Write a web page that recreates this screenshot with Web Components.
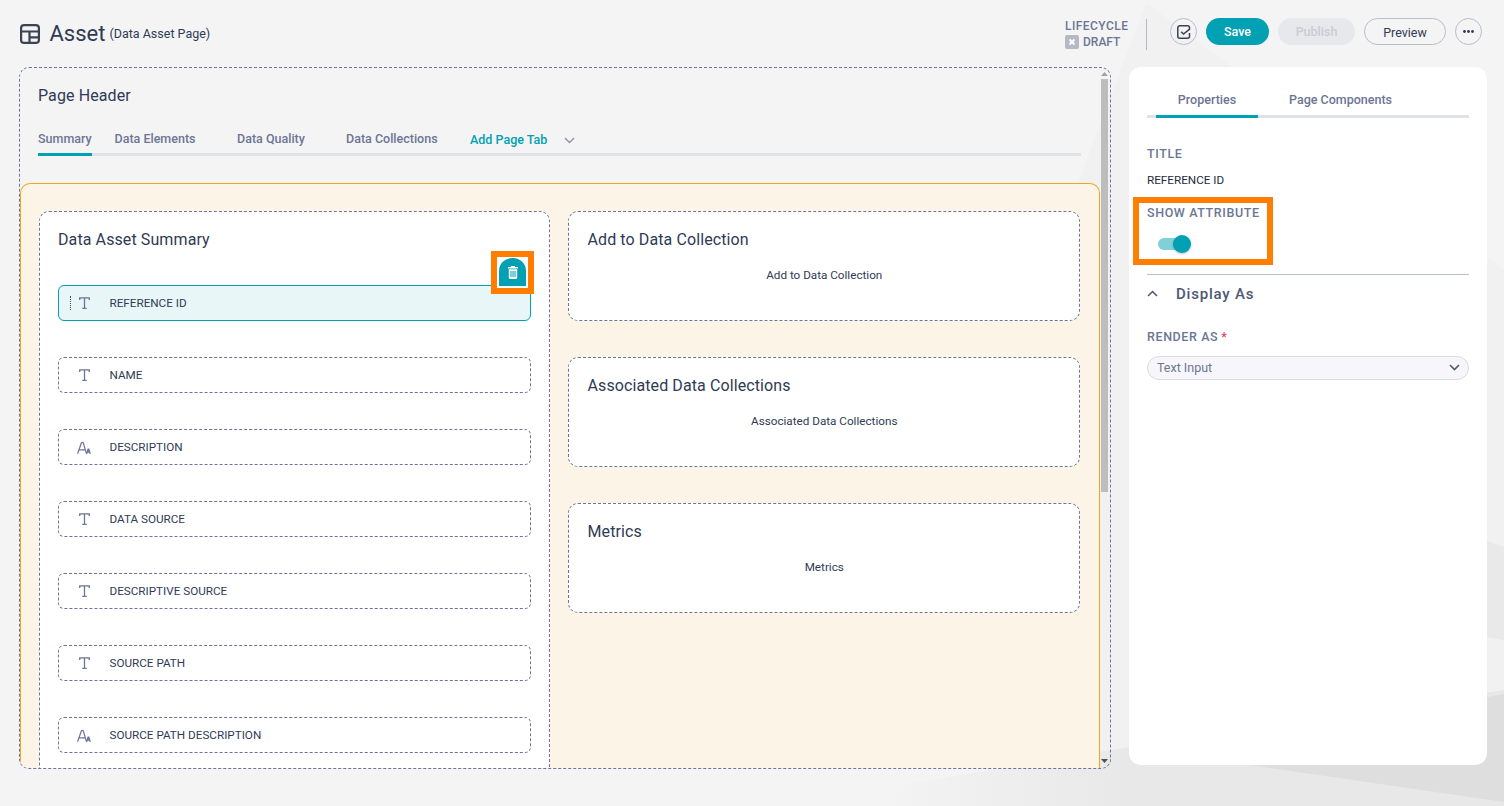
<!DOCTYPE html>
<html lang="en"><head><meta charset="utf-8"><title>Asset</title>
<style>
html,body{margin:0;height:100%;overflow:hidden}
body{background:#f4f4f4;font-family:Roboto,"Liberation Sans",sans-serif;color:#2f3a55}
</style></head><body>
<app-shell>
  <page-top slot="top"></page-top>
  <canvas-frame slot="canvas">
    <page-head></page-head>
    <layout-zone>
      <summary-card title="Data Asset Summary">
        <attr-row kind="t" selected>REFERENCE ID</attr-row>
        <attr-row kind="t">NAME</attr-row>
        <attr-row kind="a">DESCRIPTION</attr-row>
        <attr-row kind="t">DATA SOURCE</attr-row>
        <attr-row kind="t">DESCRIPTIVE SOURCE</attr-row>
        <attr-row kind="t">SOURCE PATH</attr-row>
        <attr-row kind="a">SOURCE PATH DESCRIPTION</attr-row>
      </summary-card>
      <div slot="right">
        <widget-card title="Add to Data Collection"></widget-card>
        <widget-card title="Associated Data Collections"></widget-card>
        <widget-card title="Metrics"></widget-card>
      </div>
    </layout-zone>
  </canvas-frame>
  <props-panel slot="panel"></props-panel>
</app-shell>
<script>
function def(name, css, html, init){
  customElements.define(name, class extends HTMLElement{
    connectedCallback(){
      if(this.shadowRoot) return;
      const r=this.attachShadow({mode:'open'});
      r.innerHTML='<style>'+css+'</style>'+(typeof html==='function'?html(this):html);
      if(init) init(this,r);
    }
  });
}
def('app-shell',`
  :host{display:block;position:relative;width:1504px;height:806px;overflow:hidden;background:#f4f4f4}
  .bg{position:absolute;inset:0;width:1504px;height:806px}
  .wrap{position:relative;display:grid;grid-template-columns:1092px 358px;grid-template-rows:67px 702px;column-gap:18px;padding-left:19px}
  .t{grid-column:1 / 3;margin-right:5px;height:67px}
  .p{height:698px}
`,`
  <svg class="bg" viewBox="0 0 1504 806" aria-hidden="true">
    <defs><linearGradient id="g" gradientUnits="userSpaceOnUse" x1="880" y1="0" x2="1130" y2="0"><stop offset="0" stop-color="#f4f4f4"/><stop offset="1" stop-color="#e8e8e8"/></linearGradient></defs>
    <polygon points="1146,3 1232,67 1504,270 1504,806 1060,806 1060,231" fill="#f1f1f1"/>
    <polygon points="1400,510 1504,547 1504,640 1400,625" fill="#e9e9e9"/>
    <polygon points="800,806 800,802 1129,747 1504,690 1504,806" fill="url(#g)"/>
    <polygon points="1250,765 1504,802 1504,694 1487,697" fill="#dedede"/>
  </svg>
  <div class="wrap">
    <div class="t"><slot name="top"></slot></div>
    <slot name="canvas"></slot>
    <div class="p"><slot name="panel"></slot></div>
  </div>`);
def('page-top',`
  :host{display:flex;align-items:center;height:68px;box-sizing:border-box}
  .ic{width:20px;height:20px;margin:0 9.500px 0 1px;display:block;position:relative;top:-.5px}
  h1{font:400 22px/1 Roboto,sans-serif;margin:0;color:#2f3a55}
  .sub{font-size:12.500px;margin-left:4px;color:#2f3a55;position:relative;top:-1px}
  .sp{flex:1}
  .lc{font:500 12px/15px Roboto,sans-serif;color:#6b7694;width:81px;letter-spacing:.45px}
  .dr{display:flex;align-items:center;gap:4px;letter-spacing:0;margin-top:1px}
  .x{width:14px;height:14px;background:#b5b9c6;border-radius:2px;display:inline-flex;align-items:center;justify-content:center}
  .div{width:1px;height:31px;background:#b4b8c6;margin-right:23px}
  .btn{box-sizing:border-box;height:27px;border-radius:13.500px;font:500 12.500px/27px Roboto,sans-serif;text-align:center;margin-bottom:5px}
  .icb{width:27px;border:1px solid #b8bccb;background:transparent;display:flex;align-items:center;justify-content:center}
  .save{width:63px;background:#01a0b2;color:#fff;margin-left:9px}
  .pub{width:77px;background:#e7e8ec;color:#c9ccd4;margin-left:9px}
  .prev{width:82px;border:1px solid #b8bccb;color:#2f3a55;margin-left:9px;font-weight:400;line-height:28px}
  .more{margin-left:9px}
`,`
  <svg class="ic" viewBox="0 0 20 20" fill="none" stroke="#3a4254" stroke-width="2.200"><rect x="1.100" y="1.100" width="17.800" height="17.800" rx="3"/><path d="M1 7.500h18M9.500 7.500V19M9.500 13.300H19"/></svg>
  <h1>Asset</h1><span class="sub">(Data Asset Page)</span>
  <span class="sp"></span>
  <div class="lc">LIFECYCLE<div class="dr"><span class="x"><svg width="8" height="8" viewBox="0 0 8 8"><path d="M1.500 1.500l5 5M6.500 1.500l-5 5" stroke="#fff" stroke-width="2"/></svg></span>DRAFT</div></div>
  <span class="div"></span>
  <div class="btn icb"><svg width="14" height="14" viewBox="0 0 14 14" fill="none" stroke="#3a4254" stroke-width="1.500"><path d="M12.500 4V2.800a2 2 0 0 0-2-2H2.800a2 2 0 0 0-2 2v8.400a2 2 0 0 0 2 2h7.700a2 2 0 0 0 2-2V8"/><path d="M4.200 6.800l2.300 2.300 6.500-5.300"/></svg></div>
  <div class="btn save">Save</div>
  <div class="btn pub">Publish</div>
  <div class="btn prev">Preview</div>
  <div class="btn icb more"><svg width="11" height="3" viewBox="0 0 11 3" fill="#2f3a55"><circle cx="1.500" cy="1.500" r="1.400"/><circle cx="5.500" cy="1.500" r="1.400"/><circle cx="9.500" cy="1.500" r="1.400"/></svg></div>
`);
def('canvas-frame',`
  :host{display:flex;box-sizing:border-box;height:702px;width:1092px;border:1px dashed #6b7694;border-radius:10px;overflow:hidden}
  .c{flex:1;min-width:0;overflow:hidden}
  .sb{width:7px;margin-right:2px;padding-bottom:2px;display:flex;flex-direction:column;align-items:center;flex:none}
  .arr{height:11px;display:flex;align-items:center;justify-content:center;flex:none}
  .th{height:413px;width:7px;background:#bdbdbd;flex:none}
  .sp{flex:1}
`,`
  <div class="c"><slot></slot></div>
  <div class="sb"><div class="arr"><svg width="7" height="4" viewBox="0 0 7 4"><path d="M3.500 0L7 4H0z" fill="#a3a3a3"/></svg></div><div class="th"></div><div class="sp"></div><div class="arr" style="height:10px"><svg width="7" height="4" viewBox="0 0 7 4"><path d="M0 0h7L3.500 4z" fill="#505050"/></svg></div></div>
`);
def('page-head',`
  :host{display:block;padding:0 19px 0 18px;height:115px;box-sizing:border-box}
  .h{font:400 16px/18px Roboto,sans-serif;padding-top:19px;letter-spacing:.1px;color:#2f3a55}
  .tabs{display:flex;margin-top:24px;height:24px;border-bottom:3px solid #e1e2e7;font:500 12.500px/16px Roboto,sans-serif;color:#6b7694;width:1043px;box-sizing:content-box}
  .tb{height:27px;box-sizing:border-box;padding-top:2px;flex:none}
  .on{border-bottom:3px solid #01a0b2;width:54px}
  .add{color:#01a0b2;display:flex;align-items:flex-start;padding-top:3px}
`,`
  <div class="h">Page Header</div>
  <div class="tabs">
    <div class="tb on">Summary</div>
    <div class="tb" style="margin-left:22.500px;width:122.500px">Data Elements</div>
    <div class="tb" style="width:109px">Data Quality</div>
    <div class="tb" style="width:124px">Data Collections</div>
    <div class="tb add">Add Page Tab<svg width="11" height="7" viewBox="0 0 11 7" fill="none" stroke="#8b93a8" stroke-width="1.400" style="margin:5px 0 0 17px"><path d="M1 1l4.500 4.500L10 1"/></svg></div>
  </div>
`);
def('layout-zone',`
  :host{display:grid;grid-template-columns:511px 512px;column-gap:18px;box-sizing:border-box;width:1080px;height:640px;padding:27px 18px 0 18px;background:#fbf4e7;border:1px solid #f0a71f;border-bottom:0;border-radius:10px 10px 0 0;align-items:start}
  ::slotted([slot=right]){display:flex;flex-direction:column;gap:36px}
`,`<slot></slot><slot name="right"></slot>`);
const T='<svg width="11" height="12" viewBox="0 0 11 12" fill="none" stroke="#6b7694" stroke-width="1.300"><path d="M.7 3V.8h9.600V3M5.500 .8v10.500M3.300 11.300h4.400"/></svg>';
const A='<svg width="14" height="13" viewBox="0 0 14 13" fill="none" stroke="#6b7694" stroke-width="1.200"><path d="M.6 12.700L4.300 2a1 1 0 0 1 1-.7h0a1 1 0 0 1 1 .7l3.200 10.700M1.900 8.900h6"/><path d="M9.600 12.700l1.500-4.600h.6l1.500 4.600M10.200 11h2.500" stroke-width="1.400"/></svg>';
def('summary-card',`
  :host{display:block;box-sizing:border-box;height:620px;background:#fff;border:1px dashed #6b7694;border-radius:10px;padding:0 18px}
  .h{font:400 16px/18px Roboto,sans-serif;letter-spacing:.1px;padding-top:19px;height:73px;box-sizing:border-box;color:#2f3a55}
  .l{display:flex;flex-direction:column;gap:36px}
`,h=>`<div class="h">${h.getAttribute('title')}</div><div class="l"><slot></slot></div>`);
def('attr-row',`
  :host{display:block;position:relative;box-sizing:border-box;height:36px;border:1px dashed #6b7694;border-radius:6px;font:400 11.700px/34px Roboto,sans-serif;color:#2f3a55;background:#fff}
  :host([selected]){border:1px solid #01a0b2;background:#e8f6f7}
  .r{display:flex;align-items:center;height:34px}
  .ic{width:18px;margin-left:16.300px;margin-right:16.200px;display:flex;justify-content:center;flex:none}
  .grip{position:absolute;left:10.500px;top:10px;height:14px;border-left:1px dotted #444c60}
  .trash{position:absolute;right:-4px;top:-35px;width:43px;height:43px;border:6px solid #ff7d00;box-sizing:border-box;background:#fff}
  .tab{width:27px;height:28px;box-sizing:border-box;background:#01a0b2;border-radius:13px 13px 0 0;display:flex;align-items:center;justify-content:center;margin:1px 0 0 2px}
`,h=>{
  const s=h.hasAttribute('selected');
  return `${s?`<span class="grip"></span><div class="trash"><div class="tab"><svg width="10" height="13" viewBox="0 0 10 13"><path d="M3.300 0h3.400l.6 1H10v1.500H0V1h2.700z" fill="#fff"/><path d="M.8 3.300h8.400v8.200a1.500 1.500 0 0 1-1.500 1.500H2.300a1.500 1.500 0 0 1-1.500-1.500z" fill="#fff"/><path d="M3 5v6M5 5v6M7 5v6" stroke="#01a0b2" stroke-width="1"/></svg></div></div>`:''}
  <div class="r"><span class="ic">${h.getAttribute('kind')==='a'?A:T}</span><slot></slot></div>`;
});
def('widget-card',`
  :host{display:block;box-sizing:border-box;height:110px;background:#fff;border:1px dashed #6b7694;border-radius:10px;padding:0 18px 0 18.500px}
  .h{font:400 16px/18px Roboto,sans-serif;letter-spacing:.1px;padding-top:19px;color:#2f3a55}
  .b{font:400 11.700px/14px Roboto,sans-serif;text-align:center;margin-top:19px;color:#2f3a55}
`,h=>`<div class="h">${h.getAttribute('title')}</div><div class="b">${h.getAttribute('title')}</div>`);
def('props-panel',`
  :host{display:block;box-sizing:border-box;height:698px;width:358px;background:#fff;border-radius:12px;padding:0 18px;position:relative}
  .tabs{display:flex;height:51px;box-sizing:border-box;border-bottom:3px solid #e1e2e7;font:500 12.500px/16px Roboto,sans-serif;color:#6b7694;padding:25px 0 0 9px}
  .tb{height:26px;box-sizing:border-box;text-align:center}
  .on{width:102px;border-bottom:3px solid #01a0b2}
  .tb2{width:165px}
  .lab{font:500 12.500px/14px Roboto,sans-serif;letter-spacing:.6px;color:#6b7694}
  .val{font:400 11.700px/14px Roboto,sans-serif;color:#232b40;margin-top:12px}
  .hl{position:absolute;left:4px;top:130px;width:140px;height:68px;border:6px solid #ff7d00;box-sizing:border-box}
  .tg{position:relative;width:33px;height:20px;margin:13.500px 0 0 11px}
  .tr{position:absolute;left:0;top:4px;width:28px;height:12.500px;border-radius:6px;background:#80d0d9}
  .kn{position:absolute;right:0;top:1px;width:18px;height:18px;border-radius:50%;background:#01a0b2;box-shadow:0 1px 2px rgba(0,0,0,.25)}
  .rule{border-top:1px solid #b9bcc9;margin-top:20px}
  .acc{display:flex;align-items:center;font:500 15px/18px Roboto,sans-serif;letter-spacing:.8px;color:#4d5874;padding-top:10px}
  .acc svg{margin-right:18px}
  .sel{display:flex;align-items:center;justify-content:space-between;box-sizing:border-box;height:24px;border:1px solid #d8dae4;border-radius:12px;background:#f7f7fb;font:400 12.500px/22px Roboto,sans-serif;color:#6b7694;padding:0 8px 0 9px;margin-top:12px}
  b{color:#e5426a;font-weight:500}
`,`
  <div class="tabs"><div class="tb on">Properties</div><div class="tb tb2">Page Components</div></div>
  <div class="lab" style="margin-top:29px">TITLE</div>
  <div class="val">REFERENCE ID</div>
  <div class="hl"></div>
  <div class="lab" style="margin-top:19px">SHOW ATTRIBUTE</div>
  <div class="tg"><span class="tr"></span><span class="kn"></span></div>
  <div class="rule"></div>
  <div class="acc"><svg width="11" height="7" viewBox="0 0 11 7" fill="none" stroke="#4d5874" stroke-width="1.500"><path d="M1 6l4.500-4.500L10 6"/></svg>Display As</div>
  <div class="lab" style="margin-top:27px">RENDER AS<b style="letter-spacing:0"> *</b></div>
  <div class="sel">Text Input<svg width="11" height="7" viewBox="0 0 11 7" fill="none" stroke="#4d5874" stroke-width="1.600"><path d="M1 1l4.500 4.500L10 1"/></svg></div>
`);
</script>
</body></html>
